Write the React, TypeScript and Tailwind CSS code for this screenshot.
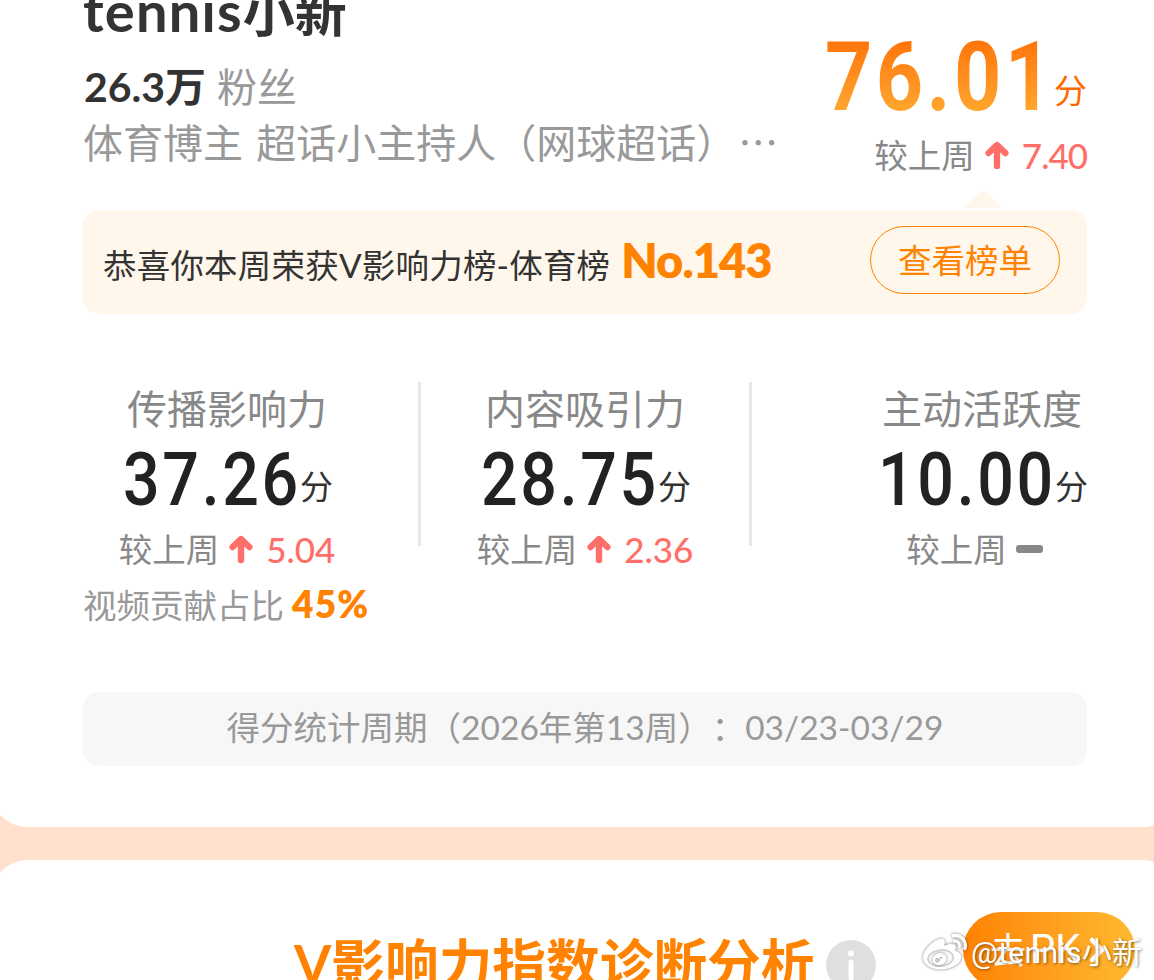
import React from "react";
import clsx from "clsx";
import { FaWeibo } from "react-icons/fa";

const ArrowUp = () => (
  <svg width="24" height="30" viewBox="0 0 24 30" fill="none" className="shrink-0">
    <path
      d="M3.6 13 12 5l8.4 8M12 7v19"
      stroke="#ff6f69"
      strokeWidth="6.4"
      strokeLinecap="round"
      strokeLinejoin="round"
    />
  </svg>
);

const Trend = ({ value, tight }: { value?: string; tight?: boolean }) => (
  <div className="flex h-10 items-center leading-10 whitespace-nowrap">
    <span className="text-[33.5px] text-[#888]">较上周</span>
    {value ? (
      <>
        <span className="ml-[10px] flex">
          <ArrowUp />
        </span>
        <span
          className={clsx(
            "ml-[13px] text-[35px] font-medium text-[#ff6f69]",
            tight && "tracking-[-1px]",
          )}
        >
          {value}
        </span>
      </>
    ) : (
      <span className="mr-[15px] ml-[9px] h-2 w-[27px] rounded-[3px] bg-[#888]" />
    )}
  </div>
);

type MetricProps = {
  label: string;
  score: string;
  change?: string;
};

const Metric = ({ label, score, change }: MetricProps) => (
  <div className="flex flex-col items-center">
    <div className="h-[54px] text-[40px] leading-[54px] whitespace-nowrap text-[#888]">{label}</div>
    <div className="mt-[3px] flex h-20 items-start text-[#222]">
      <span className="ml-[2px] w-[177px] origin-left scale-x-[0.86] font-[Roboto] text-[75px] leading-[80px] font-medium tracking-[3.1px] whitespace-nowrap">
        {score}
      </span>
      <span className="mt-[7px] text-[33px] leading-[80px] text-[#333]">分</span>
    </div>
    <div className="mt-[10px]">
      <Trend value={change} />
    </div>
  </div>
);

const Divider = () => <div className="h-[164px] w-[3px] shrink-0 bg-[#e8e8e8]" />;

const Profile = () => (
  <div className="flex justify-between">
    <div className="-mt-[18px] whitespace-nowrap">
      <h1 className="h-[60px] text-[52px] leading-[60px] font-bold text-[#333]">
        <span className="text-[56px] leading-none tracking-[1.2px]">tennis</span>小新
      </h1>
      <div className="mt-[19px] ml-px h-[52px] text-[41px] leading-[52px]">
        <span className="font-bold text-[#333]">26.3万</span>
        <span className="ml-[11px] text-[40px] text-[#999]">粉丝</span>
      </div>
      <p className="mt-px h-[54px] text-[40px] leading-[54px] text-[#999] [word-spacing:3px]">
        体育博主 超话小主持人（网球超话）
        <span className="ml-[2px] font-['Noto_Sans_CJK_SC']">…</span>
      </p>
    </div>
    <div className="flex flex-col items-end pt-[27px]">
      <div className="flex h-[100px] items-start">
        <span className="-mr-[41px] w-[270px] origin-left scale-x-[0.86] bg-gradient-to-b from-[#ff7508] from-15% to-[#ffa62d] to-85% bg-clip-text font-[Roboto] text-[96px] leading-[100px] font-bold tracking-[4px] whitespace-nowrap text-transparent">
          76.01
        </span>
        <span className="mt-[13px] text-[33px] leading-[100px] text-[#ff6a00]">分</span>
      </div>
      <div className="mt-2">
        <Trend value="7.40" tight />
      </div>
    </div>
  </div>
);

const RankBanner = () => (
  <div className="relative mt-[35px] flex h-[104px] items-center justify-between rounded-2xl bg-[#fff7ec] pr-[27px] pl-5">
    <svg className="absolute -top-5 left-[881px]" width="38" height="18" viewBox="0 0 38 18">
      <path d="M0 18 16 2q3-3 6 0l16 16z" fill="#fff7ec" />
    </svg>
    <p className="pt-[6px] text-[33.5px] leading-[98px] whitespace-nowrap text-[#333]">
      <span className="tracking-[0.2px]">恭喜你本周荣获V影响力榜-体育榜</span>
      <span className="ml-[11px] text-[47px] leading-none font-extrabold tracking-[-1px] text-[#ff8200]">
        No.143
      </span>
    </p>
    <button className="-mt-1 h-[68px] w-[190px] rounded-full border border-[#ff8200] text-[33.5px] leading-[66px] text-[#ff8200]">
      查看榜单
    </button>
  </div>
);

const Diagnosis = () => (
  <section className="-mr-6 -ml-2 mt-[33px] flex h-[240px] items-start rounded-t-[35px] bg-white pl-[302px]">
    <h2 className="mt-[63px] w-[520px] text-[53.7px] leading-[80px] font-bold whitespace-nowrap text-[#ff8200]">
      V影响力指数诊断分析
    </h2>
    <svg className="mt-20 ml-3 shrink-0" width="50" height="50" viewBox="0 0 50 50">
      <circle cx="25" cy="25" r="25" fill="#dfdfdf" />
      <circle cx="25" cy="13.5" r="3" fill="#fff" />
      <path d="M25 22v16" stroke="#fff" strokeWidth="5" strokeLinecap="round" />
    </svg>
    <button className="mt-[52px] ml-[87px] flex h-[76px] w-[172px] shrink-0 items-center rounded-full bg-gradient-to-r from-[#ff8200] to-[#ffb92f] pl-[27px] text-[36px] leading-[76px] text-white">
      去<span className="ml-1 font-[Roboto] text-[40px]">PK</span>
      <svg className="ml-2 shrink-0" width="18" height="28" viewBox="0 0 18 28" fill="none">
        <path d="m4 4 10 10L4 24" stroke="#fff" strokeWidth="4.5" strokeLinecap="round" />
      </svg>
    </button>
  </section>
);

const Watermark = () => (
  <div className="absolute top-[929px] left-[923px] flex h-12 items-center whitespace-nowrap text-white">
    <FaWeibo className="size-11 drop-shadow-[0_0_1.5px_rgba(0,0,0,0.55)]" />
    <span className="ml-1 font-[Roboto,'Noto_Sans_CJK_SC'] text-[30px] leading-[50px] tracking-[0.3px] [text-shadow:1px_1px_3px_rgba(0,0,0,0.5)]">
      @tennis小新
    </span>
  </div>
);

const App = () => {
  return (
    <main
      lang="zh-CN"
      className="relative h-[980px] w-[1154px] overflow-hidden bg-[#ffe1cd] font-[Lato,'Noto_Sans_CJK_SC',sans-serif] [text-spacing-trim:space-all]"
    >
      <section className="-mr-6 -ml-2 h-[827px] rounded-b-[35px] bg-white pr-[91px] pl-[91px]">
        <div className="flex h-full w-[1004px] flex-col">
          <Profile />
          <RankBanner />
          <div className="mt-[68px] flex items-start">
            <div className="w-[288px]">
              <Metric label="传播影响力" score="37.26" change="5.04" />
              <p className="mt-[15px] h-10 text-[33.5px] leading-10 whitespace-nowrap text-[#999]">
                视频贡献占比
                <span className="ml-2 text-[37px] font-extrabold tracking-[1.2px] text-[#ff8200]">
                  45%
                </span>
              </p>
            </div>
            <div className="ml-[47px]">
              <Divider />
            </div>
            <div className="ml-[57px] w-[214px]">
              <Metric label="内容吸引力" score="28.75" change="2.36" />
            </div>
            <div className="ml-[57px]">
              <Divider />
            </div>
            <div className="ml-[126px] w-[208px]">
              <Metric label="主动活跃度" score="10.00" />
            </div>
          </div>
          <div className="mt-[68px] h-[74px] rounded-2xl bg-[#f7f7f7] text-center text-[33.5px] leading-[70px] text-[#999]">
            得分统计周期（2026年第13周）：03/23-03/29
          </div>
        </div>
      </section>
      <Diagnosis />
      <Watermark />
    </main>
  );
};

export default App;
